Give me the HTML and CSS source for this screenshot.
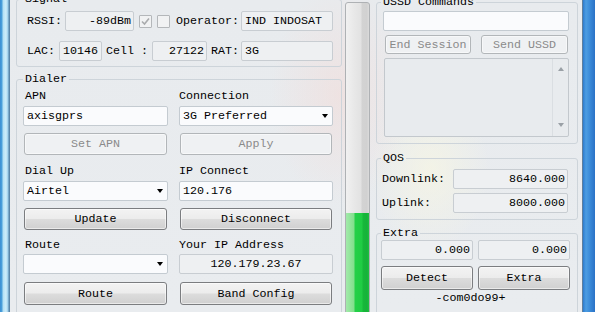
FILE: index.html
```html
<!DOCTYPE html>
<html>
<head>
<meta charset="utf-8">
<link rel="stylesheet" href="styles.css">
</head>
<body>
<div class="frame-left"></div>
<div class="main">
  <div class="col-a">
    <fieldset class="group signal">
      <legend>Signal</legend>
      <div class="sig-row">
        <span class="lbl">RSSI:</span>
        <div class="box ro num w-rssi">-89dBm</div>
        <span class="chk chk-1"><svg width="11" height="11" viewBox="0 0 11 11"><path d="M2 5.5 L4.5 8 L9 2.5" fill="none" stroke="#a9abad" stroke-width="1.6"/></svg></span>
        <span class="chk chk-2"></span>
        <span class="lbl l-op">Operator:</span>
        <div class="box ro w-op">IND INDOSAT</div>
      </div>
      <div class="sig-row row-2">
        <span class="lbl">LAC:</span>
        <div class="box ro w-lac">10146</div>
        <span class="lbl l-cell">Cell :</span>
        <div class="box ro num w-cell">27122</div>
        <span class="lbl l-rat">RAT:</span>
        <div class="box ro w-op">3G</div>
      </div>
    </fieldset>
    <fieldset class="group dialer">
      <legend>Dialer</legend>
      <div class="dial-grid">
        <div class="cell left">
          <span class="lbl">APN</span>
          <div class="box edit">axisgprs</div>
          <button class="btn disabled">Set APN</button>
        </div>
        <div class="cell">
          <span class="lbl">Connection</span>
          <div class="box edit select"><span>3G Preferred</span><span class="arrow"></span></div>
          <button class="btn disabled">Apply</button>
        </div>
        <div class="cell left r2">
          <span class="lbl">Dial Up</span>
          <div class="box edit select"><span>Airtel</span><span class="arrow"></span></div>
          <button class="btn">Update</button>
        </div>
        <div class="cell r2">
          <span class="lbl">IP Connect</span>
          <div class="box edit">120.176</div>
          <button class="btn">Disconnect</button>
        </div>
        <div class="cell left r3">
          <span class="lbl">Route</span>
          <div class="box edit select"><span></span><span class="arrow"></span></div>
          <button class="btn">Route</button>
        </div>
        <div class="cell r3">
          <span class="lbl">Your IP Address</span>
          <div class="box ro center">120.179.23.67</div>
          <button class="btn">Band Config</button>
        </div>
      </div>
    </fieldset>
  </div>

  <div class="pbar">
    <div class="pbar-fill" style="height:110px"></div>
  </div>

  <div class="col-c">
    <fieldset class="group ussd">
      <legend>USSD Commands</legend>
      <div class="box edit ussd-in"></div>
      <div class="ussd-btns">
        <button class="btn disabled b-end">End Session</button>
        <button class="btn disabled b-send">Send USSD</button>
      </div>
      <div class="textarea">
        <div class="scroll"><span class="arr up"></span><span class="arr down"></span></div>
      </div>
    </fieldset>
    <fieldset class="group qos">
      <legend>QOS</legend>
      <div class="qrow"><span class="lbl q-lbl">Downlink:</span><div class="box ro num q-box">8640.000</div></div>
      <div class="qrow row-up"><span class="lbl q-lbl">Uplink:</span><div class="box ro num q-box">8000.000</div></div>
    </fieldset>
    <fieldset class="group extra">
      <legend>Extra</legend>
      <div class="extra-grid">
        <div class="box ro num">0.000</div>
        <div class="box ro num">0.000</div>
        <button class="btn tall">Detect</button>
        <button class="btn tall">Extra</button>
      </div>
      <div class="sig-text">-com0do99+</div>
    </fieldset>
  </div>
</div>
<div class="frame-right"></div>
</body>
</html>
```

FILE: styles.css
```css
* { box-sizing: border-box; }
html, body { margin: 0; padding: 0; }
body {
  width: 595px;
  height: 312px;
  overflow: hidden;
  display: flex;
  font-family: "Liberation Mono", "Courier New", monospace;
  font-size: 11.67px;
  color: #000;
  background: #e9ecef;
}

.frame-left {
  flex: none;
  width: 10px;
  height: 312px;
  background: linear-gradient(to right, #3b8fd3 0, #4da2dc 2px, #b3e0f4 3px, #cfeefb 6px, #9acdea 8px, #5a86a9 9px, #5a86a9 10px);
}
.frame-right {
  flex: none;
  width: 13px;
  height: 312px;
  background: linear-gradient(to right, #5f7f9c 0, #5f7f9c 1px, #2d7ccf 1px, #4c9de2 4px, #3a8ad8 8px, #2a72c6 13px);
}

.main {
  flex: none;
  width: 572px;
  height: 312px;
  overflow: hidden;
  display: flex;
  align-items: flex-start;
  padding: 0 4px 0 6px;
  background:
    radial-gradient(ellipse 70px 110px at 330px 95px, rgba(245, 215, 210, 0.45), rgba(245, 215, 210, 0) 100%),
    radial-gradient(ellipse 60px 80px at 420px 170px, rgba(250, 248, 225, 0.6), rgba(250, 248, 225, 0) 100%),
    linear-gradient(#e8ebee, #e9ecef);
}

/* group boxes */
.group {
  margin: 0;
  min-width: 0;
  border: 1px solid #cdd4da;
  border-radius: 3px;
}
.group legend {
  padding: 0 2px;
  height: 14px;
  line-height: 14px;
}

.lbl { white-space: pre; line-height: 14px; }

.box {
  height: 20px;
  line-height: 18px;
  padding: 0 3px;
  border: 1px solid #c8cdd2;
  border-radius: 2px;
  white-space: pre;
  overflow: hidden;
}
.box.ro { background: #eef0f2; }
.box.edit { background: #fafbfd; border-color: #c4cbd1; }
.box.num { text-align: right; padding-right: 2px; }
.box.center { text-align: center; }

.btn {
  display: block;
  font: inherit;
  color: #000;
  padding: 0;
  border: 1px solid #7b7d80;
  border-radius: 3px;
  background: linear-gradient(#f3f3f3 0%, #ececec 48%, #dcdcdc 52%, #d0d0d0 100%);
  box-shadow: inset 0 0 0 1px rgba(255, 255, 255, 0.55);
}
.btn.disabled {
  color: #8a8a8a;
  border-color: #b2b6b9;
  background: #eff1f3;
  box-shadow: inset 0 0 0 1px rgba(255, 255, 255, 0.5);
}

/* column A */
.col-a { flex: none; width: 326px; margin-top: -8px; }
.signal { padding: 5px 8px 5px 10px; }
.signal legend { margin-left: -4px; }
.sig-row { display: flex; align-items: center; height: 20px; }
.sig-row.row-2 { margin-top: 10px; }
.w-rssi { width: 69px; margin-left: 3px; }
.chk {
  width: 13px; height: 13px;
  margin-left: 5px;
  border: 1px solid #b4b7ba;
  border-radius: 1px;
  background: #f1f2f3;
  display: flex; align-items: center; justify-content: center;
}
.l-op { margin-left: 6px; }
.w-op { width: 92px; margin-left: 2px; }
.w-lac { width: 43px; margin-left: 4px; }
.l-cell { margin-left: 4px; }
.w-cell { width: 55px; margin-left: 4px; padding-right: 3px; }
.l-rat { margin-left: 4px; }

.dialer { margin-top: 5px; padding: 3px 8px 20px 6px; }
.dial-grid { display: grid; grid-template-columns: 145px 154px; column-gap: 11px; }
.cell { display: flex; flex-direction: column; }
.cell .lbl { height: 14px; margin-bottom: 3px; }
.cell.left .lbl { padding-left: 2px; }
.cell.r2 .lbl { margin-top: 1px; }
.cell.r3 .lbl { margin-bottom: 2px; }
.cell .box { padding-left: 3px; }
.cell .btn { height: 22px; margin: 7px 1px 8px; }
.cell.r3 .btn { height: 23px; margin-top: 8px; }
.select { display: flex; align-items: center; justify-content: space-between; padding-right: 4px; }
.arrow {
  width: 0; height: 0;
  border-left: 3.5px solid transparent;
  border-right: 3.5px solid transparent;
  border-top: 4px solid #000;
}

/* progress */
.pbar {
  flex: none;
  width: 25px;
  height: 322px;
  margin: 2px 0 0 3px;
  border: 1px solid #aeb1b4;
  border-radius: 3px;
  display: flex;
  flex-direction: column;
  justify-content: flex-end;
  overflow: hidden;
  background: linear-gradient(to right, #f1f1f1 0, #e8e8e8 8px, #e2e2e2 15px, #d3d3d3 16px, #d1d1d1 21px, #dcdcdc 23px);
}
.pbar-fill {
  background: linear-gradient(to right, #a3eaab 0, #82df8d 8px, #24d048 9px, #1fcc43 16px, #17b83a 17px, #16b23a 21px, #1fc040 23px);
}

/* column C */
.col-c { flex: none; width: 202px; margin: -5px 0 0 6px; }
.ussd { padding: 2px 8px 6px 6px; }
.ussd legend { margin-left: -2px; }
.ussd-in { width: 186px; background: #f6f9fc; }
.ussd-btns { display: flex; margin-top: 4px; }
.ussd-btns .btn { height: 19px; }
.b-end { width: 86px; margin-left: 2px; }
.b-send { width: 87px; margin-left: 10px; }
.textarea {
  width: 185px;
  height: 79px;
  margin: 4px 0 0 1px;
  border: 1px solid #c3c8cd;
  border-radius: 2px;
  background: #e8ebee;
  display: flex;
  justify-content: flex-end;
}
.scroll {
  width: 16px;
  border-left: 1px solid #dadee2;
  display: flex;
  flex-direction: column;
  justify-content: space-between;
  align-items: center;
  padding: 8px 0 9px;
}
.arr { width: 0; height: 0; border-left: 3.5px solid transparent; border-right: 3.5px solid transparent; }
.arr.up { border-bottom: 4px solid #9aa0a6; }
.arr.down { border-top: 4px solid #9aa0a6; }

.qos { margin-top: 7px; padding: 4px 9px 6px 5px; }
.qos legend { margin-left: -1px; }
.qrow { display: flex; align-items: center; height: 20px; }
.qrow.row-up { margin-top: 4px; }
.q-lbl { width: 71px; }
.q-box { width: 115px; padding-right: 3px; }

.extra { margin-top: 6px; padding: 0 7px 20px 4px; }
.extra-grid { display: grid; grid-template-columns: 92px 92px; column-gap: 5px; row-gap: 6px; }
.btn.tall { height: 24px; }
.sig-text { padding-right: 10px; text-align: center; line-height: 14px; margin-top: 1px; }
```
